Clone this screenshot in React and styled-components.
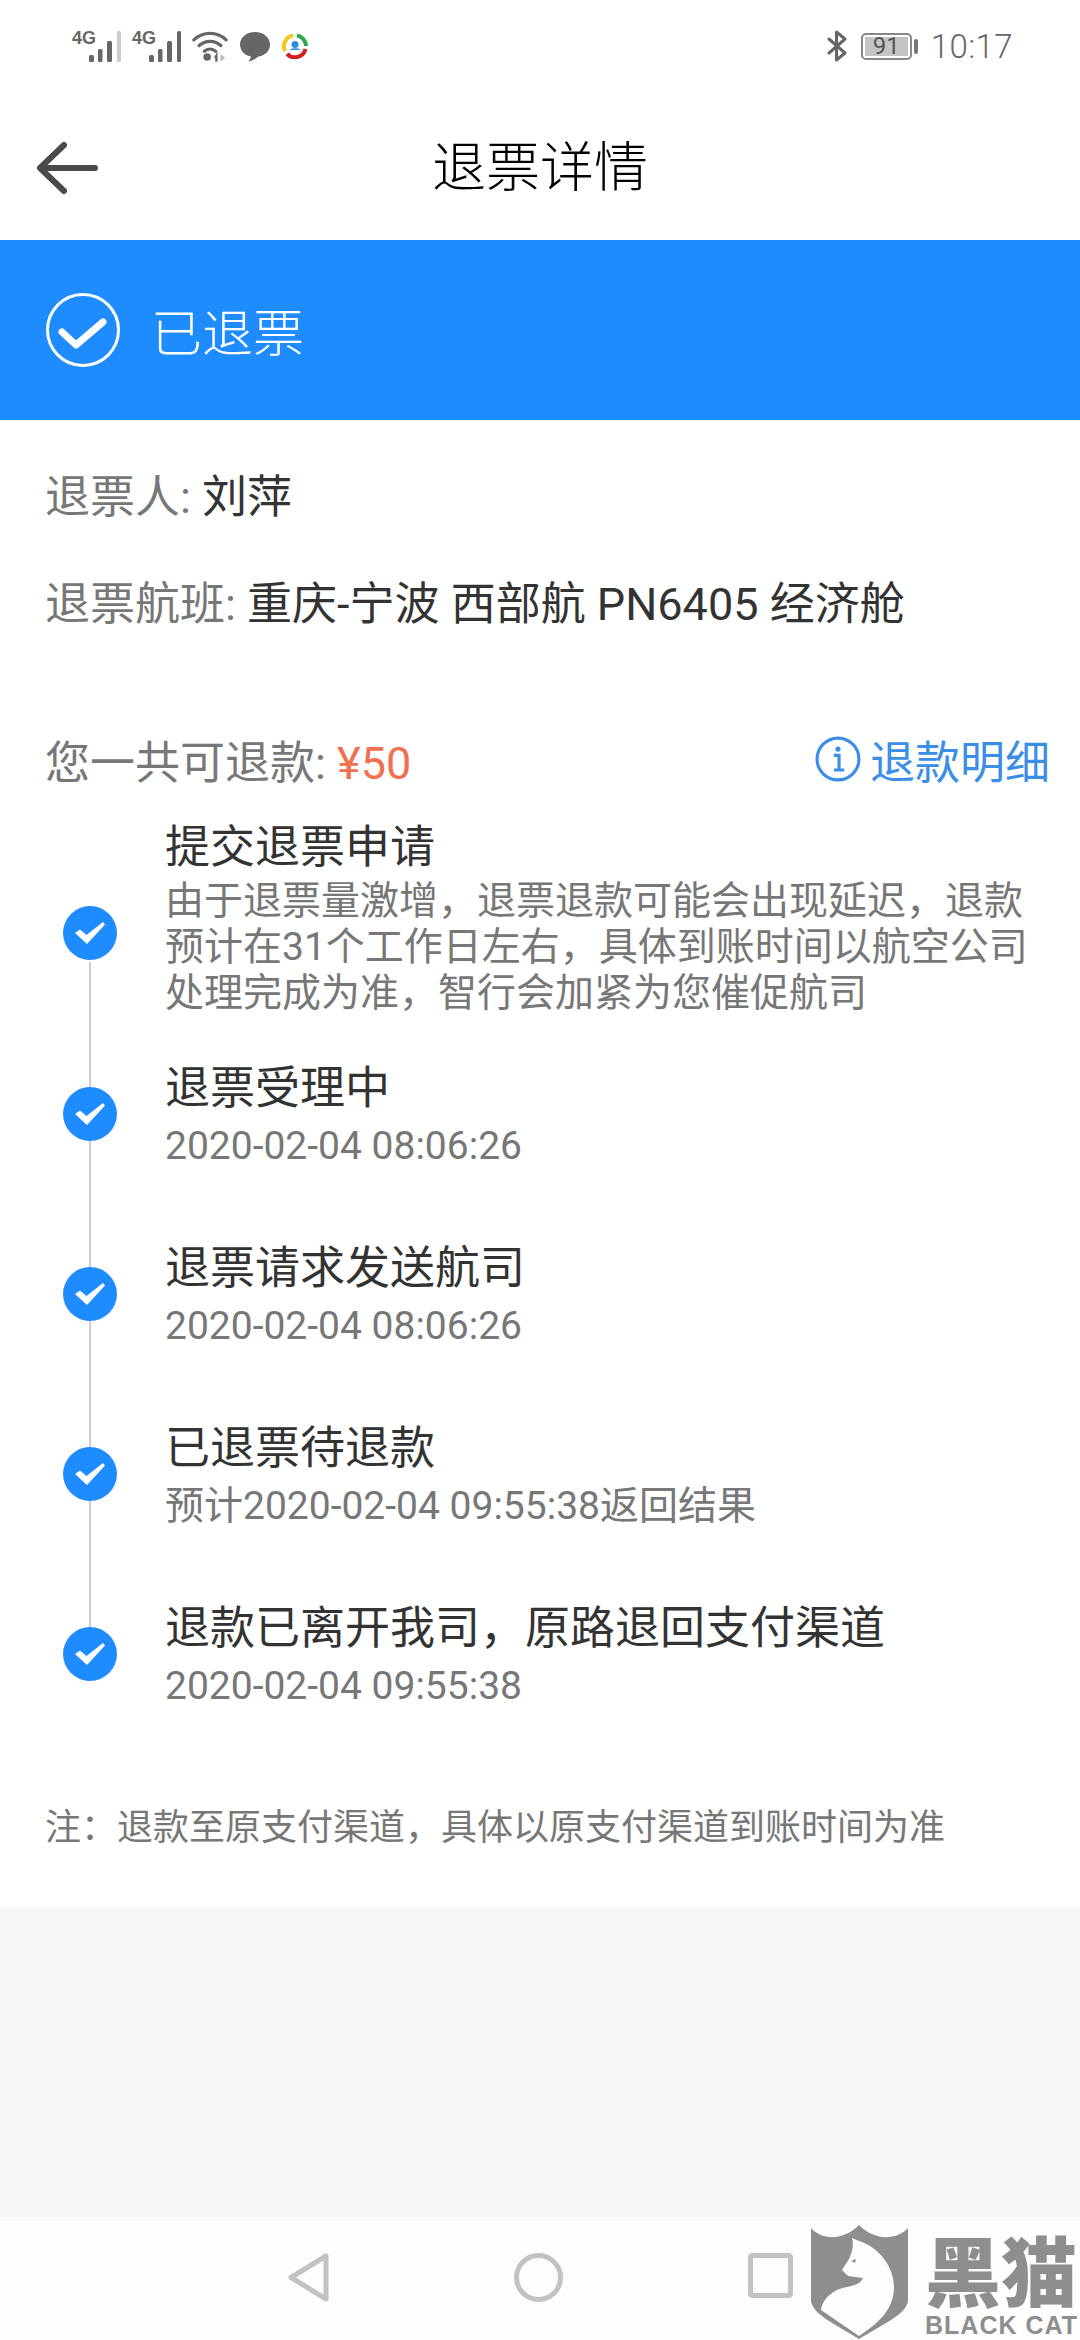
import React from "react";
import styled, { createGlobalStyle } from "styled-components";

const GlobalStyle = createGlobalStyle`
  html, body {
    margin: 0;
    padding: 0;
    background: #fff;
  }
  body {
    font-family: Roboto, "Noto Sans CJK SC", sans-serif;
  }
`;

const Page = styled.div`
  position: relative;
  width: 1080px;
  height: 2340px;
  display: flex;
  flex-direction: column;
  overflow: hidden;
  background: #fff;
`;

const StatusBar = styled.div`
  height: 90px;
  flex: none;
  display: flex;
  justify-content: space-between;
  align-items: center;
  padding: 2px 67px 0 72px;
  box-sizing: border-box;
  color: #666;
`;
const StatusGroup = styled.div`
  display: flex;
  align-items: center;
  gap: ${(p) => p.$gap || 12}px;
`;
const Signal = styled.div`
  display: flex;
  align-items: flex-start;
  height: 31px;
`;
const Net = styled.span`
  font-family: "Liberation Sans Narrow", "Liberation Sans", sans-serif;
  font-weight: 700;
  font-size: 18px;
  line-height: 15px;
  width: 17px;
  color: #666;
`;
const Battery = styled.div`
  position: relative;
  width: 51px;
  height: 27px;
  box-sizing: border-box;
  border: 2px solid #888;
  border-radius: 5px;
  padding: 2px;
  margin-right: 5px;
  display: flex;
  &::after {
    content: "";
    position: absolute;
    right: -8px;
    top: 4px;
    width: 4px;
    height: 15px;
    border-radius: 2px;
    background: #777;
  }
`;
const BatteryLevel = styled.div`
  flex: 1;
  background: #c4c4c4;
  color: #555;
  font-size: 24px;
  line-height: 19px;
  text-align: center;
`;
const Clock = styled.span`
  font-size: 33px;
  font-weight: 300;
  color: #666;
  letter-spacing: 0.4px;
`;

const Header = styled.div`
  position: relative;
  height: 150px;
  flex: none;
  display: flex;
  align-items: center;
  justify-content: center;
  padding-bottom: 3px;
  box-sizing: border-box;
`;
const Title = styled.h1`
  margin: 0;
  font-size: 54px;
  font-weight: 300;
  color: #000;
`;
const BackButton = styled.div`
  position: absolute;
  left: 36px;
  top: 51px;
  line-height: 0;
`;

const Banner = styled.div`
  height: 180px;
  flex: none;
  background: #1e8cff;
  display: flex;
  align-items: center;
  gap: 30px;
  padding-left: 45px;
  color: #fff;
  font-size: 51px;
  font-weight: 300;
`;

const Content = styled.div`
  flex: none;
  padding: 0 30px 0 45px;
`;
const InfoRow = styled.div`
  font-size: 45px;
  line-height: 60px;
  margin-top: ${(p) => p.$top}px;
  color: #333;
  white-space: nowrap;
`;
const Label = styled.span`
  color: #777;
`;
const RefundRow = styled.div`
  display: flex;
  justify-content: space-between;
  align-items: center;
  margin-top: 94px;
  height: 60px;
  font-size: 45px;
  color: #777;
`;
const Amount = styled.span`
  color: #f0704f;
`;
const DetailLink = styled.div`
  display: flex;
  align-items: center;
  gap: 9px;
  color: #3a8ee6;
  font-size: 45px;
`;

const Timeline = styled.div`
  position: relative;
  margin-top: 29px;
  display: flex;
  flex-direction: column;
  &::before {
    content: "";
    position: absolute;
    left: 44px;
    top: 144px;
    height: 665px;
    width: 2px;
    background: #ccc;
  }
`;
const Step = styled.div`
  display: flex;
  align-items: center;
  gap: 48px;
  margin-top: ${(p) => p.$top || 0}px;
`;
const Dot = styled.div`
  position: relative;
  flex: none;
  width: 54px;
  height: 54px;
  border-radius: 50%;
  background: #1e8cff;
  margin: ${(p) => p.$shift || 0}px 0 0 18px;
  display: flex;
  align-items: center;
  justify-content: center;
`;
const StepText = styled.div`
  min-width: 0;
`;
const StepTitle = styled.div`
  font-size: 45px;
  line-height: 60px;
  color: #333;
  white-space: nowrap;
`;
const StepNote = styled.div`
  font-size: 39px;
  line-height: 46px;
  color: #777;
  margin-top: ${(p) => p.$top || 0}px;
`;
const DescLine = styled.div`
  white-space: nowrap;
`;
const Footnote = styled.div`
  font-size: 36px;
  line-height: 50px;
  color: #777;
  margin-top: 94px;
  white-space: nowrap;
`;

const Spacer = styled.div`
  flex: 1;
  margin-top: 54px;
  background: #f7f7f7;
`;
const NavBar = styled.div`
  height: 123px;
  flex: none;
  background: #fdfdfd;
  position: relative;
  display: flex;
  align-items: flex-start;
  padding: 36px 0 0 288px;
  box-sizing: border-box;
  gap: 185px;
  svg {
    display: block;
  }
`;

const Watermark = styled.div`
  position: absolute;
  right: 3px;
  bottom: 1px;
  display: flex;
  gap: 17px;
  color: #8e8e8e;
`;
const WatermarkText = styled.div`
  width: 152px;
  display: flex;
  flex-direction: column;
  padding-top: 8px;
`;
const WatermarkName = styled.div`
  font-family: "Noto Sans CJK SC", sans-serif;
  font-size: 76px;
  line-height: 70px;
  font-weight: 900;
  white-space: nowrap;
`;
const WatermarkLatin = styled.div`
  font-family: "Liberation Sans Narrow", "Liberation Sans", sans-serif;
  font-size: 25px;
  line-height: 24px;
  font-weight: 700;
  margin-top: 10px;
  white-space: nowrap;
  letter-spacing: 1px;
`;

const Bars = ({ last = "#666" }) => (
  <svg width="32" height="31" viewBox="0 0 32 31">
    <g fill="#666">
      <rect x="0" y="24" width="5" height="7" rx="1.5" />
      <rect x="9" y="18" width="4.500" height="13" rx="1.5" />
      <rect x="18" y="10" width="5" height="21" rx="1.5" />
      <rect x="28" y="0" width="4" height="31" rx="1.5" fill={last} />
    </g>
  </svg>
);

const Wifi = () => (
  <svg width="36" height="33" viewBox="0 0 38 34" fill="none">
    <g stroke="#666" strokeWidth="3.4" strokeLinecap="round">
      <path d="M2 10C12 1 26 1 36 10" />
      <path d="M7.500 16C14 10 24 10 30.500 16" />
      <path d="M13 22C16.500 19 21.500 19 25 22" />
    </g>
    <circle cx="16" cy="28" r="4" fill="#666" />
    <path d="M27 22v11h-2.500v-5l-2 2z" fill="#666" />
    <path d="M30 25v8l5-4z" fill="#bbb" />
  </svg>
);

const Bubble = () => (
  <svg width="32" height="31" viewBox="0 0 32 31">
    <path
      d="M16 1C7.500 1 1 6.500 1 13.500C1 20 6.500 25 12 25.500C11.500 27.500 10.500 29 9.500 30.500C13.500 30 17 27.500 19.500 25.500C26.500 24.500 31 19.500 31 13.500C31 6.500 24.500 1 16 1Z"
      fill="#666"
    />
  </svg>
);

const AppLogo = () => (
  <svg width="26" height="26" viewBox="0 0 26 26" fill="none">
    <path d="M15 2.500A11 11 0 0 1 24 13" stroke="#2fa84f" strokeWidth="4" />
    <path d="M23.500 16A11 11 0 0 1 5 21" stroke="#d0201f" strokeWidth="4" />
    <path d="M3 18A11 11 0 0 1 11 2.500" stroke="#f2c81e" strokeWidth="4" />
    <circle cx="13" cy="11.500" r="3.500" fill="#2c8fe0" />
    <path d="M7.500 17C9 14.500 17 14.500 18.500 17Z" fill="#2c8fe0" />
  </svg>
);

const Bluetooth = () => (
  <svg width="20" height="32" viewBox="0 0 20 32" fill="none">
    <path
      d="M2 9L18 23L9.500 30V2L18 9L2 23"
      stroke="#666"
      strokeWidth="3"
      strokeLinejoin="round"
      strokeLinecap="round"
    />
  </svg>
);

const StepCheck = () => (
  <svg width="32" height="26" viewBox="0 0 32 26">
    <path d="M1 13L6 9.500L12.500 15L29 2L31 4.500L13 24Z" fill="#fff" />
  </svg>
);

const Shield = () => (
  <svg width="97" height="114" viewBox="0 0 97 114">
    <path
      d="M0 3C6 10 16 13 24 12C34 11 42 6 48 0C54 6 62 11 72 12C80 13 91 10 97 3V76C95 90 70 100 48 114C26 100 2 90 0 76Z"
      fill="#8e8e8e"
    />
    <path
      d="M41 13L48 16C68 22 83 42 83 62C83 84 68 98 48 111L10 85C12 72 24 64 36 62C45 60 50 58 52 53L37 51L31 45L38 34C41 28 43 20 41 13Z"
      fill="#fdfdfd"
    />
    <path d="M40 36L45 34L44 38Z" fill="#8e8e8e" />
  </svg>
);

const steps = [
  { title: "退票受理中", note: "2020-02-04 08:06:26" },
  { title: "退票请求发送航司", note: "2020-02-04 08:06:26" },
  { title: "已退票待退款", note: "预计2020-02-04 09:55:38返回结果" },
  { title: "退款已离开我司，原路退回支付渠道", note: "2020-02-04 09:55:38" },
];

const App = () => {
  return (
    <Page>
      <GlobalStyle />
      <StatusBar>
        <StatusGroup $gap={11}>
          <Signal>
            <Net>4G</Net>
            <Bars last="#ccc" />
          </Signal>
          <Signal>
            <Net>4G</Net>
            <Bars />
          </Signal>
          <Wifi />
          <Bubble />
          <AppLogo />
        </StatusGroup>
        <StatusGroup $gap={14}>
          <Bluetooth />
          <Battery>
            <BatteryLevel>91</BatteryLevel>
          </Battery>
          <Clock>10:17</Clock>
        </StatusGroup>
      </StatusBar>

      <Header>
        <BackButton>
          <svg width="62" height="54" viewBox="0 0 62 54" fill="none">
            <path
              d="M59 27H5M28 4L4 27L28 50"
              stroke="#4a4a4a"
              strokeWidth="6"
              strokeLinecap="round"
              strokeLinejoin="round"
            />
          </svg>
        </BackButton>
        <Title>退票详情</Title>
      </Header>

      <Banner>
        <svg width="76" height="76" viewBox="0 0 76 76" fill="none">
          <circle cx="38" cy="38" r="35.500" stroke="#fff" strokeWidth="3" />
          <path
            d="M17 40L31 53L58 30"
            stroke="#fff"
            strokeWidth="7"
            strokeLinecap="round"
            strokeLinejoin="round"
          />
        </svg>
        已退票
      </Banner>

      <Content>
        <InfoRow $top={48}>
          <Label>退票人: </Label>刘萍
        </InfoRow>
        <InfoRow $top={47}>
          <Label>退票航班: </Label>重庆-宁波 西部航 PN6405 经济舱
        </InfoRow>
        <RefundRow>
          <span>
            您一共可退款: <Amount>¥50</Amount>
          </span>
          <DetailLink>
            <svg width="46" height="46" viewBox="0 0 44 44" fill="none">
              <circle cx="22" cy="22" r="20" stroke="#3a8ee6" strokeWidth="3" />
              <path
                d="M18 18.500H23V32M18 32.500H28"
                stroke="#3a8ee6"
                strokeWidth="3"
              />
              <circle cx="22" cy="12.500" r="2.500" fill="#3a8ee6" />
            </svg>
            退款明细
          </DetailLink>
        </RefundRow>

        <Timeline>
          <Step>
            <Dot $shift={32}>
              <StepCheck />
            </Dot>
            <StepText>
              <StepTitle>提交退票申请</StepTitle>
              <StepNote>
                <DescLine>由于退票量激增，退票退款可能会出现延迟，退款</DescLine>
                <DescLine>预计在31个工作日左右，具体到账时间以航空公司</DescLine>
                <DescLine>处理完成为准，智行会加紧为您催促航司</DescLine>
              </StepNote>
            </StepText>
          </Step>
          {steps.map((step) => (
            <Step key={step.title} $top={step === steps[0] ? 43 : 70}>
              <Dot>
                <StepCheck />
              </Dot>
              <StepText>
                <StepTitle>{step.title}</StepTitle>
                <StepNote $top={4}>{step.note}</StepNote>
              </StepText>
            </Step>
          ))}
        </Timeline>

        <Footnote>注：退款至原支付渠道，具体以原支付渠道到账时间为准</Footnote>
      </Content>

      <Spacer />

      <NavBar>
        <svg width="41" height="49" viewBox="0 0 41 49" fill="none">
          <path
            d="M38 3V46L3 24.500Z"
            stroke="#c2c2c2"
            strokeWidth="5"
            strokeLinejoin="round"
          />
        </svg>
        <svg width="49" height="49" viewBox="0 0 49 49" fill="none">
          <circle cx="24.500" cy="24.500" r="22" stroke="#c2c2c2" strokeWidth="5" />
        </svg>
        <svg width="45" height="45" viewBox="0 0 45 45" fill="none">
          <rect
            x="2.500"
            y="2.500"
            width="40"
            height="40"
            rx="2"
            stroke="#c2c2c2"
            strokeWidth="5"
          />
        </svg>
      </NavBar>

      <Watermark>
        <Shield />
        <WatermarkText>
          <WatermarkName>黑猫</WatermarkName>
          <WatermarkLatin>BLACK CAT</WatermarkLatin>
        </WatermarkText>
      </Watermark>
    </Page>
  );
};

export default App;
